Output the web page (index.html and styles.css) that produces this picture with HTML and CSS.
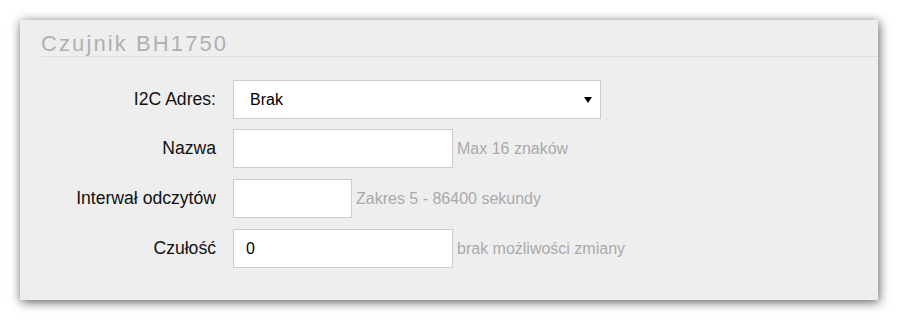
FILE: index.html
```html
<!DOCTYPE html>
<html lang="pl">
<head>
    <meta charset="UTF-8">
    <meta name="viewport" content="width=device-width, initial-scale=1.0">
    <title>Czujnik BH1750</title>
    <link rel="stylesheet" href="styles.css">
</head>
<body>
    <div class="panel">
        <h3 class="panel-title">Czujnik BH1750</h3>

        <form class="sensor-form">
            <div class="form-row">
                <label for="i2c">I2C Adres:</label>
                <div class="select-wrap">
                    <select id="i2c">
                        <option>Brak</option>
                    </select>
                    <span class="select-arrow"></span>
                </div>
            </div>
            <div class="form-row">
                <label for="name">Nazwa</label>
                <input type="text" id="name" class="input-wide">
                <span class="help">Max 16 znaków</span>
            </div>
            <div class="form-row">
                <label for="interval">Interwał odczytów</label>
                <input type="text" id="interval" class="input-short">
                <span class="help">Zakres 5 - 86400 sekundy</span>
            </div>
            <div class="form-row">
                <label for="sens">Czułość</label>
                <input type="text" id="sens" class="input-wide" value="0">
                <span class="help">brak możliwości zmiany</span>
            </div>
        </form>
    </div>
</body>
</html>
```

FILE: styles.css
```css
* {
    margin: 0;
    padding: 0;
    box-sizing: border-box;
}

body {
    font-family: "Liberation Sans", Arial, sans-serif;
    background-color: #ffffff;
    padding: 20px;
}

.panel {
    width: 858px;
    height: 280px;
    background-color: #eeeeee;
    box-shadow: 1px 2px 10px rgba(0, 0, 0, 0.65);
}

.panel-title {
    margin-left: 21px;
    padding-top: 11px;
    font-size: 22px;
    line-height: 25px;
    font-weight: normal;
    letter-spacing: 2.1px;
    color: #b0b0b0;
    border-bottom: 1px solid #dddddd;
}

.sensor-form {
    padding-top: 23px;
}

.form-row {
    display: flex;
    align-items: center;
    margin-bottom: 11px;
}

.form-row:first-child {
    margin-bottom: 10px;
}

.form-row label {
    width: 213px;
    padding-right: 17px;
    text-align: right;
    font-size: 17.6px;
    color: #111111;
}

.select-wrap {
    position: relative;
}

select,
input {
    height: 39px;
    border: 1px solid #cccccc;
    background-color: #ffffff;
    font-family: inherit;
    font-size: 16px;
    color: #000000;
    outline: none;
}

select {
    width: 368px;
    padding-left: 16px;
    appearance: none;
    -webkit-appearance: none;
    border-radius: 0;
}

.select-arrow {
    position: absolute;
    right: 9px;
    top: 17px;
    width: 0;
    height: 0;
    border-left: 4px solid transparent;
    border-right: 4px solid transparent;
    border-top: 6px solid #000000;
    pointer-events: none;
}

input {
    padding-left: 12px;
}

.input-wide {
    width: 220px;
}

.input-short {
    width: 119px;
}

.help {
    margin-left: 4px;
    font-size: 16px;
    color: #aaaaaa;
}
```
